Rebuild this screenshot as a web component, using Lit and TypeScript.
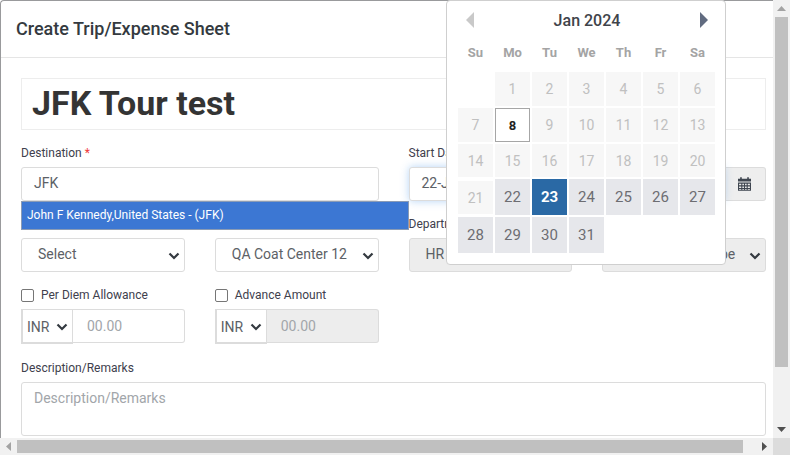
import { LitElement, html, css, svg } from "lit";
import { customElement } from "lit/decorators.js";

const chevron = svg`<svg class="chev" width="12" height="8" viewBox="0 0 12 8"><path d="M1.500 1.500 6 6 10.500 1.500" fill="none" stroke="#343a40" stroke-width="2.200"/></svg>`;

@customElement("app-root")
export class AppRoot extends LitElement {
  static styles = css`
    :host {
      display: block;
      width: 790px;
      height: 455px;
      position: relative;
      overflow: hidden;
      background: #fff;
      font-family: Roboto, "Liberation Sans", sans-serif;
      color: #495057;
      box-sizing: border-box;
    }
    * { box-sizing: border-box; }
    .frame { display: grid; grid-template-columns: 773px 17px; grid-template-rows: 438px 17px; width: 790px; height: 455px; }
    .view { overflow: hidden; }
    .modal { width: 790px; height: 600px; border: 1px solid #999a9c; border-right: 0; border-radius: 4px 0 0 0; }
    .head { height: 57px; border-bottom: 1px solid #e5e5e5; padding: 0 15px 2px; display: flex; align-items: center; }
    .head h5 { margin: 0; font-size: 18px; font-weight: 500; color: #343a40; }
    .body { padding: 20px 20px 0; width: 772px; }
    .title { width: 745px; height: 52px; border: 1px solid #ededed; padding: 0 10px 2px; font-size: 34px; font-weight: 700; color: #343434; display: flex; align-items: center; }
    .grid { display: grid; grid-template-columns: repeat(4, 1fr); column-gap: 30px; margin-top: 15px; width: 745px; }
    label, .lab { font-size: 12px; color: #40404d; line-height: 16px; display: block; height: 22px; white-space: nowrap; }
    .req { color: #f03a3a; }
    .half { grid-column: span 2; }
    .ctl { height: 34px; border: 1px solid #dcdcdc; border-radius: 3px; font-size: 14px; color: #5c6166; display: flex; align-items: center; padding: 0 12px 2px; background: #fff; white-space: nowrap; overflow: hidden; }
    .sel { position: relative; padding-left: 16px; }
    .sel .chev { position: absolute; right: 4px; top: 13px; }
    .dis { background: #ededed; }
    .ind { padding-left: 16px; }
    .far { padding-left: 20px; }
    .clip { display: block; width: 115px; overflow: hidden; }
    .date { display: flex; }
    .date .ctl:first-child { flex: 1; border-radius: 3px 0 0 3px; position: relative; z-index: 1; overflow: visible; box-shadow: 0 0 8px rgba(90, 160, 235, 0.45); }
    .addon { width: 42px; background: #eee; border-left: 0; border-radius: 0 3px 3px 0 !important; justify-content: center; padding: 0; }
    .row2 { margin-top: 15px; height: 56px; display: flex; flex-direction: column; justify-content: end; }
    .row2 .lab { height: 22px; }
    .row3 { margin-top: 14px; }
    .chk { display: flex; align-items: center; gap: 7px; height: 18px; margin-bottom: 5px; font-size: 12px; color: #40404d; }
    .box { width: 13px; height: 13px; border: 1px solid #767676; border-radius: 2px; background: #fff; }
    .amount { display: flex; height: 35px; }
    .cur { width: 52px; height: 35px; border: 2px solid #dcdcdc; border-top-width: 1px; border-right-width: 1px; background: #fff; font-size: 14px; color: #5c6166; display: flex; align-items: center; padding: 2px 0 0 4px; position: relative; }
    .cur .chev { position: absolute; right: 4px; top: 13px; }
    .amount .ctl { flex: 1; height: 34px; border-radius: 0 3px 3px 0; border-left: 0; color: #a2a6aa; padding: 0 12px 0 14px; }
    .wide { grid-column: 1 / -1; margin-top: 16px; }
    .wide label { height: 22px; }
    .ta { height: 54px; border: 1px solid #dcdcdc; border-radius: 3px; padding: 5px 12px; font-size: 14px; color: #a2a6aa; line-height: 21px; }
    .vbar { background: #f1f1f1; display: flex; flex-direction: column; align-items: center; }
    .hbar { background: #f1f1f1; display: flex; align-items: center; }
    .corner { background: #dcdcdc; }
    .btn { width: 17px; height: 17px; display: flex; align-items: center; justify-content: center; flex: none; }
    .vthumb { width: 13px; height: 350px; background: #c0c0c0; }
    .vspace { flex: 1; }
    .hthumb { height: 13px; width: 726px; background: #c0c0c0; }
    .hspace { flex: 1; }
    .ac { position: absolute; z-index: 2; left: 21px; top: 201px; width: 388px; height: 29px; background: #3c77d3; border: 1px solid #8a9bb5; color: #fff; font-size: 12px; display: flex; align-items: center; padding: 0 5px 2px; }
    .cal { position: absolute; z-index: 2; left: 446px; top: 0; width: 280px; height: 265px; background: #fff; border: 1px solid #cfcfcf; border-radius: 4px; padding: 0 11px; }
    .calhead { height: 38px; display: flex; align-items: center; justify-content: space-between; padding: 0 6px 0 8px; font-size: 16px; font-weight: 500; color: #40434a; }
    .tri { width: 0; height: 0; border-top: 8px solid transparent; border-bottom: 8px solid transparent; }
    .tri.l { border-right: 8px solid #c9c9c9; }
    .tri.r { border-left: 8px solid #616b80; }
    .dow { display: grid; grid-template-columns: repeat(7, 35px); column-gap: 2px; height: 26px; margin-bottom: 7px; align-items: center; text-align: center; font-size: 13px; font-weight: 700; color: #a4a4a4; }
    .days { display: grid; grid-template-columns: repeat(7, 35px); column-gap: 2px; row-gap: 2px; grid-template-rows: 34px 34px 33px 36px 36px; }
    .d { display: flex; align-items: center; justify-content: center; font-size: 14px; color: #c0c0c0; background: #f7f7f7; }
    .e { background: #e6e7eb; color: #6d6d72; font-size: 15px; }
    .low { margin: 2px 0 1px; }
    .sel23 { background: #2a69a5; color: #fff; font-weight: 700; }
    .today { background: #fff; border: 1px solid #a6a6a6; color: #222; font-weight: 700; font-size: 13px; }
    .blank { background: none; }
  `;

  private cell(n: number) {
    let c = "d";
    if (n === 8) c += " today";
    if (n === 21) c += " low";
    if (n >= 22) c += " e";
    if (n === 23) c += " sel23";
    return html`<div class=${c}>${n}</div>`;
  }

  render() {
    const days = Array.from({ length: 31 }, (_, i) => i + 1);
    return html`
      <div class="frame">
        <div class="view">
          <div class="modal">
            <div class="head"><h5>Create Trip/Expense Sheet</h5></div>
            <div class="body">
              <div class="title">JFK Tour test</div>
              <div class="grid">
                <div class="half">
                  <label>Destination <span class="req">*</span></label>
                  <div class="ctl">JFK</div>
                </div>
                <div class="half">
                  <label>Start Date</label>
                  <div class="date"><div class="ctl">22-Jan-2024</div><div class="ctl addon"><svg width="13" height="14" viewBox="1 1 12 12.600"><path fill="#3f4650" d="M1 2.500h2V1h1.500v1.500h5V1H11v1.500h2V5H1zM1 6h12v7.500H1zm1 1v1.500h2V7zm3 0v1.500h1.500V7zm2.500 0v1.500h1.500V7zm2.500 0v1.500h2V7zM2 9.500V11h2V9.500zm3 0V11h1.500V9.500zm2.500 0V11h1.500V9.500zm2.500 0V11h2V9.500zM2 12v.6h2V12zm3 0v.6h1.500V12zm2.500 0v.6h1.500V12zm2.500 0v.6h2V12z" fill-rule="evenodd"/></svg></div></div>
                </div>
                <div class="row2"><div class="ctl sel">Select${chevron}</div></div>
                <div class="row2"><div class="ctl sel"><span class="clip">QA Coat Center 123</span>${chevron}</div></div>
                <div class="row2"><div class="lab">Department</div><div class="ctl dis ind">HR</div></div>
                <div class="row2"><div class="ctl sel dis far">Select Travel Type${chevron}</div></div>
                <div class="row3">
                  <div class="chk"><span class="box"></span>Per Diem Allowance</div>
                  <div class="amount"><div class="cur">INR${chevron}</div><div class="ctl">00.00</div></div>
                </div>
                <div class="row3">
                  <div class="chk"><span class="box"></span>Advance Amount</div>
                  <div class="amount"><div class="cur">INR${chevron}</div><div class="ctl dis">00.00</div></div>
                </div>
                <div class="wide">
                  <label>Description/Remarks</label>
                  <div class="ta">Description/Remarks</div>
                </div>
              </div>
            </div>
          </div>
        </div>
        <div class="vbar">
          <div class="btn"><svg width="9" height="5" viewBox="0 0 9 5"><path d="M4.500 0 9 5H0z" fill="#a3a3a3"/></svg></div>
          <div class="vthumb"></div>
          <div class="vspace"></div>
          <div class="btn"><svg width="9" height="5" viewBox="0 0 9 5"><path d="M4.500 5 9 0H0z" fill="#505050"/></svg></div>
        </div>
        <div class="hbar">
          <div class="btn"><svg width="5" height="9" viewBox="0 0 5 9"><path d="M0 4.500 5 0v9z" fill="#a3a3a3"/></svg></div>
          <div class="hthumb"></div>
          <div class="hspace"></div>
          <div class="btn"><svg width="5" height="9" viewBox="0 0 5 9"><path d="M5 4.500 0 0v9z" fill="#505050"/></svg></div>
        </div>
        <div class="corner"></div>
      </div>
      <div class="ac">John F Kennedy,United States - (JFK)</div>
      <div class="cal">
        <div class="calhead"><span class="tri l"></span><span>Jan 2024</span><span class="tri r"></span></div>
        <div class="dow"><span>Su</span><span>Mo</span><span>Tu</span><span>We</span><span>Th</span><span>Fr</span><span>Sa</span></div>
        <div class="days"><div class="blank"></div>${days.map((n) => this.cell(n))}</div>
      </div>
    `;
  }
}
